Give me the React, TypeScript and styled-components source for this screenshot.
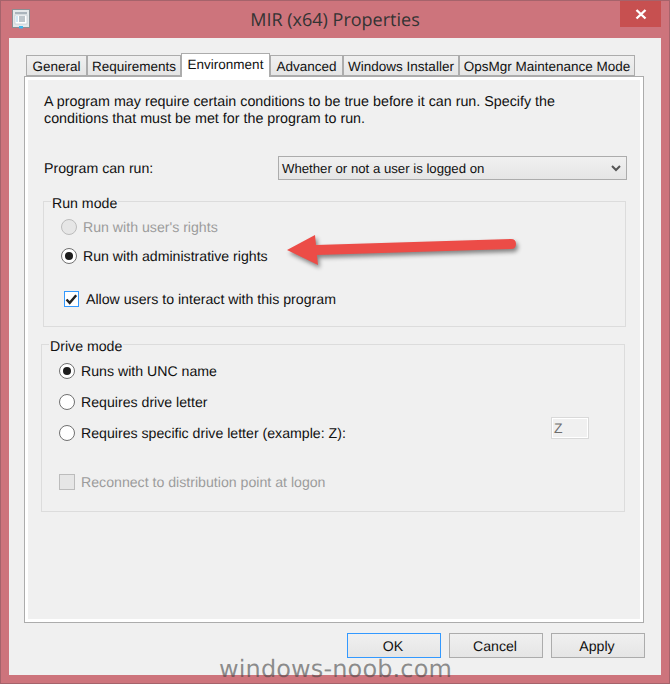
import React from 'react';
import styled, { createGlobalStyle } from 'styled-components';

const GlobalStyle = createGlobalStyle`
  html, body {
    margin: 0;
    padding: 0;
    background: #cd747c;
  }
  body {
    font-family: "Liberation Sans", Arial, sans-serif;
    font-size: 14.15px;
    color: #111;
    text-rendering: geometricPrecision;
  }
`;

const tabs = ['General', 'Requirements', 'Environment', 'Advanced', 'Windows Installer', 'OpsMgr Maintenance Mode'];
const tabWidths = [61, 94, 89, 73, 116, 176];

const Radio = ({ checked = false, disabled = false }) => (
  <RadioCircle $disabled={disabled}>{checked && <RadioDot />}</RadioCircle>
);

const App = () => {
  return (
    <>
      <GlobalStyle />
      <Window>
        <TitleBar>
          <AppIcon viewBox="0 0 18 20">
            <rect x="0.5" y="0.5" width="17" height="18" fill="#e4e8ea" stroke="#8a8f94" />
            <rect x="3" y="3" width="12" height="2" fill="#aab4bc" />
            <rect x="3" y="6" width="12" height="9" fill="#fff" stroke="#b5c0c8" strokeWidth="0.6" />
            <path d="M7 8h6M7 10h6M7 12h6" stroke="#7c8b96" strokeWidth="1" />
            <path d="M4.5 8h1M4.5 10h1M4.5 12h1" stroke="#3d9ad6" strokeWidth="1" />
            <rect x="7" y="17" width="4" height="2.5" fill="#3fb4ea" />
          </AppIcon>
          <Title>MIR (x64) Properties</Title>
          <CloseButton>
            <svg width="12" height="12" viewBox="0 0 12 12">
              <path d="M1.5 2l9 8.5M10.5 2l-9 8.5" stroke="#fff" strokeWidth="2.4" />
            </svg>
          </CloseButton>
        </TitleBar>
        <Client>
          <TabRow>
            {tabs.map((name, i) => (
              <Tab key={name} $active={name === 'Environment'} style={{ width: tabWidths[i] }}>
                {name}
              </Tab>
            ))}
          </TabRow>
          <Panel>
            <Intro>
              A program may require certain conditions to be true before it can run. Specify the
              <br />
              conditions that must be met for the program to run.
            </Intro>
            <SelectRow>
              <span>Program can run:</span>
              <Select>
                Whether or not a user is logged on
                <svg width="10" height="7" viewBox="0 0 10 7">
                  <path d="M1 1l4 4 4-4" fill="none" stroke="#555" strokeWidth="2" />
                </svg>
              </Select>
            </SelectRow>
            <RunGroup>
              <Legend>Run mode</Legend>
              <Option $disabled>
                <Radio disabled />
                Run with user's rights
              </Option>
              <Option $top={9}>
                <Radio checked />
                Run with administrative rights
              </Option>
              <CheckOption $top={23}>
                <CheckBox>
                  <svg width="13" height="11" viewBox="0 0 13 11">
                    <path d="M1.5 5.5l3.2 3.4 6.5-7.6" fill="none" stroke="#222" strokeWidth="2.4" />
                  </svg>
                </CheckBox>
                Allow users to interact with this program
              </CheckOption>
            </RunGroup>
            <DriveGroup>
              <Legend>Drive mode</Legend>
              <Option>
                <Radio checked />
                Runs with UNC name
              </Option>
              <Option $top={11}>
                <Radio />
                Requires drive letter
              </Option>
              <LetterRow>
                <Option>
                  <Radio />
                  Requires specific drive letter (example: Z):
                </Option>
                <LetterInput>Z</LetterInput>
              </LetterRow>
              <Option $top={29} $disabled>
                <DisabledBox />
                Reconnect to distribution point at logon
              </Option>
            </DriveGroup>
          </Panel>
          <Footer>
            <Button $focused>OK</Button>
            <Button>Cancel</Button>
            <Button>Apply</Button>
          </Footer>
        </Client>
        <Arrow width="240" height="40" viewBox="0 0 240 40">
          <path
            d="M4 18 L32 3 L33 13 L228 7 Q233 7 233 12 Q233 17 228 17 L34 23 L35 33 Z"
            fill="#ec4c47"
          />
        </Arrow>
        <Watermark>windows-noob.com</Watermark>
      </Window>
    </>
  );
};

const Window = styled.div`
  position: relative;
  box-sizing: border-box;
  width: 670px;
  height: 684px;
  display: flex;
  flex-direction: column;
  padding: 0 8px 8px;
  background: #cd747c;
  border: 1px solid #a5636b;
  overflow: hidden;
`;
const TitleBar = styled.div`
  height: 37px;
  flex: none;
  display: flex;
  align-items: flex-start;
`;
const AppIcon = styled.svg`
  width: 18px;
  height: 20px;
  margin: 8px 0 0 3px;
  flex: none;
`;
const Title = styled.div`
  flex: 1;
  text-align: center;
  font-family: "Open Sans", sans-serif;
  font-size: 18px;
  line-height: 24px;
  margin-top: 7px;
  padding-left: 20px;
  color: #333;
`;
const CloseButton = styled.div`
  width: 41px;
  height: 26px;
  flex: none;
  display: flex;
  align-items: center;
  justify-content: center;
  background: #c75050;
`;
const Client = styled.div`
  flex: 1;
  display: flex;
  flex-direction: column;
  padding: 15px 17px 0 15px;
  background: #f0f0f0;
`;
const TabRow = styled.div`
  display: flex;
  align-items: flex-end;
  height: 23px;
  padding-left: 2px;
  flex: none;
`;
const Tab = styled.div<{ $active?: boolean }>`
  box-sizing: border-box;
  position: relative;
  height: ${(p) => (p.$active ? '24px' : '21px')};
  margin-bottom: ${(p) => (p.$active ? '-1px' : '0')};
  display: flex;
  align-items: center;
  justify-content: center;
  white-space: nowrap;
  font-size: 13.5px;
  border: 1px solid #acacac;
  border-bottom: ${(p) => (p.$active ? '0' : '1px solid #acacac')};
  background: ${(p) => (p.$active ? '#fff' : 'linear-gradient(#f0f0f0, #e5e5e5)')};
  padding: ${(p) => (p.$active ? '0 0 3px' : '1px 0 0')};
  z-index: ${(p) => (p.$active ? 2 : 0)};
`;
const Panel = styled.div`
  box-sizing: border-box;
  width: 620px;
  height: 547px;
  flex: none;
  padding: 17px 18px 0 19px;
  border: 1px solid #acacac;
  box-shadow: inset 0 0 0 3px #fff;
`;
const Intro = styled.p`
  margin: 0;
  line-height: 17px;
  font-size: 14.3px;
`;
const SelectRow = styled.div`
  display: grid;
  grid-template-columns: 234px 349px;
  align-items: center;
  margin-top: 28px;
`;
const Select = styled.div`
  box-sizing: border-box;
  height: 24px;
  display: flex;
  align-items: center;
  justify-content: space-between;
  padding: 0 5px 0 3px;
  font-size: 13.2px;
  border: 1px solid #acacac;
  background: linear-gradient(#f0f0f0, #e5e5e5);
`;
const RunGroup = styled.fieldset`
  box-sizing: border-box;
  width: 583px;
  height: 134px;
  margin: 13px 0 0 -1px;
  padding: 7px 0 0 17px;
  border: 1px solid #dcdcdc;
`;
const DriveGroup = styled(RunGroup)`
  width: 584px;
  height: 176px;
  margin: 9px 0 0 -3px;
  padding-top: 8px;
`;
const Legend = styled.legend`
  position: relative;
  top: 2px;
  margin-left: -10px;
  padding: 0 1px;
  line-height: 17px;
`;
const Option = styled.div<{ $top?: number; $disabled?: boolean }>`
  display: flex;
  align-items: center;
  gap: 6px;
  height: 20px;
  margin-top: ${(p) => p.$top ?? 0}px;
  color: ${(p) => (p.$disabled ? '#9c9c9c' : '#111')};
`;
const CheckOption = styled(Option)`
  padding-left: 3px;
  gap: 7px;
`;
const LetterRow = styled.div`
  display: flex;
  align-items: center;
  justify-content: space-between;
  height: 20px;
  margin-top: 11px;
  padding-right: 35px;
`;
const LetterInput = styled.div`
  box-sizing: border-box;
  width: 38px;
  height: 22px;
  margin-top: -10px;
  padding-left: 2px;
  line-height: 20px;
  color: #6d6d6d;
  font-size: 14px;
  border: 1px solid #d9d9d9;
  box-shadow: inset 0 0 0 1px #fff;
`;
const RadioCircle = styled.span<{ $disabled?: boolean }>`
  box-sizing: border-box;
  width: 16px;
  height: 16px;
  flex: none;
  display: flex;
  align-items: center;
  justify-content: center;
  border-radius: 50%;
  border: 1px solid ${(p) => (p.$disabled ? '#bcbcbc' : '#707070')};
  background: ${(p) => (p.$disabled ? '#e6e6e6' : '#fff')};
`;
const RadioDot = styled.span`
  width: 8px;
  height: 8px;
  border-radius: 50%;
  background: #1c1c1c;
`;
const CheckBox = styled.span`
  box-sizing: border-box;
  width: 15px;
  height: 16px;
  flex: none;
  display: flex;
  align-items: center;
  justify-content: center;
  border: 1px solid #3399ff;
  background: #fff;
`;
const DisabledBox = styled.span`
  box-sizing: border-box;
  width: 16px;
  height: 16px;
  flex: none;
  border: 1px solid #bcbcbc;
  background: #e6e6e6;
`;
const Footer = styled.div`
  display: flex;
  justify-content: flex-end;
  gap: 8px;
  margin-top: 10px;
  margin-right: -1px;
`;
const Button = styled.div<{ $focused?: boolean }>`
  box-sizing: border-box;
  width: 94px;
  height: 25px;
  display: flex;
  align-items: center;
  justify-content: center;
  padding-right: 2px;
  border: 1px solid ${(p) => (p.$focused ? '#3399ff' : '#acacac')};
  background: linear-gradient(#f0f0f0, #e5e5e5);
`;
const Arrow = styled.svg`
  position: absolute;
  left: 282px;
  top: 231px;
  filter: drop-shadow(2px 3px 2px rgba(0, 0, 0, 0.45));
`;
const Watermark = styled.div`
  position: absolute;
  left: 218px;
  top: 652px;
  font-family: "DejaVu Sans", sans-serif;
  font-size: 24px;
  letter-spacing: 0.13px;
  line-height: 32px;
  color: rgba(70, 70, 70, 0.6);
  white-space: nowrap;
`;

export default App;
